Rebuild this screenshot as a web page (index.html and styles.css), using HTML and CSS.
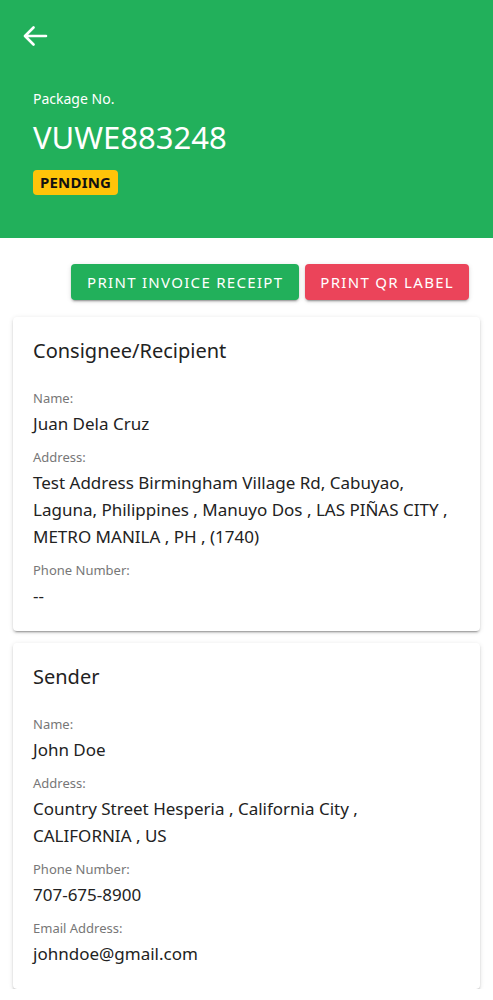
FILE: index.html
```html
<!DOCTYPE html>
<html>
<head>
<meta charset="utf-8">
<link rel="stylesheet" href="styles.css">
</head>
<body>
<header class="top">
  <svg class="back" width="25" height="20" viewBox="0 0 25 20" fill="none" stroke="#fff" stroke-width="2.6" stroke-linecap="round" stroke-linejoin="round">
    <path d="M10.5 1.5 L2 10 L10.5 18.5 M2.5 10 H23"/>
  </svg>
  <div class="info">
    <div class="pkg-label">Package No.</div>
    <div class="pkg-no">VUWE883248</div>
    <span class="badge">PENDING</span>
  </div>
</header>
<div class="actions">
  <button class="btn btn-green">PRINT INVOICE RECEIPT</button>
  <button class="btn btn-red">PRINT QR LABEL</button>
</div>
<section class="card">
  <h2 class="card-title">Consignee/Recipient</h2>
  <div class="field">
    <div class="label">Name:</div>
    <div class="value">Juan Dela Cruz</div>
  </div>
  <div class="field">
    <div class="label">Address:</div>
    <div class="value">Test Address Birmingham Village Rd, Cabuyao, Laguna, Philippines , Manuyo Dos , LAS PIÑAS CITY , METRO MANILA , PH , (1740)</div>
  </div>
  <div class="field">
    <div class="label">Phone Number:</div>
    <div class="value">--</div>
  </div>
</section>
<section class="card">
  <h2 class="card-title">Sender</h2>
  <div class="field">
    <div class="label">Name:</div>
    <div class="value">John Doe</div>
  </div>
  <div class="field">
    <div class="label">Address:</div>
    <div class="value">Country Street Hesperia , California City ,<br>CALIFORNIA , US</div>
  </div>
  <div class="field">
    <div class="label">Phone Number:</div>
    <div class="value">707-675-8900</div>
  </div>
  <div class="field">
    <div class="label">Email Address:</div>
    <div class="value">johndoe@gmail.com</div>
  </div>
</section>
</body>
</html>
```

FILE: styles.css
```css
html, body {
  margin: 0;
  padding: 0;
  background: #ffffff;
  font-family: "Noto Sans", "Open Sans", sans-serif;
  color: #222222;
}

.top {
  background: #22b05b;
  height: 238px;
  box-sizing: border-box;
  padding-top: 26px;
}

.back {
  display: block;
  margin-left: 23px;
}

.info {
  padding-left: 33px;
  margin-top: 43px;
  color: #ffffff;
}

.pkg-label {
  font-size: 14px;
  line-height: 20px;
}

.pkg-no {
  font-size: 31px;
  line-height: 40px;
  margin-top: 8px;
}

.badge {
  display: inline-block;
  margin-top: 13px;
  background: #ffc409;
  color: #111111;
  font-weight: 700;
  font-size: 15px;
  line-height: 17px;
  padding: 4px 7px;
  border-radius: 4px;
  letter-spacing: 0.2px;
}

.actions {
  display: flex;
  justify-content: flex-end;
  gap: 6px;
  padding: 26px 24px 0 0;
}

.btn {
  border: none;
  height: 36px;
  padding: 0 16px;
  border-radius: 4px;
  color: #ffffff;
  font-family: "Noto Sans", "Open Sans", sans-serif;
  font-size: 15px;
  letter-spacing: 1.3px;
  box-shadow: 0 3px 1px -2px rgba(0,0,0,.2), 0 2px 2px 0 rgba(0,0,0,.14), 0 1px 5px 0 rgba(0,0,0,.12);
}

.btn-green { background: #22b05b; }
.btn-red { background: #eb445a; padding: 0 15px; }

.card {
  margin: 17px 13px 0 13px;
  padding: 20px 20px 22px 20px;
  border-radius: 4px;
  background: #ffffff;
  box-shadow: 0 3px 1px -2px rgba(0,0,0,.2), 0 2px 2px 0 rgba(0,0,0,.14), 0 1px 5px 0 rgba(0,0,0,.12);
}

.card + .card {
  margin-top: 12px;
}

.card-title {
  margin: 0 0 24px 0;
  font-size: 20px;
  line-height: 28px;
  font-weight: 400;
  color: #222222;
}

.field {
  margin-top: 11px;
}

.label {
  font-size: 13px;
  line-height: 18px;
  color: #777777;
}

.value {
  margin-top: 3px;
  font-size: 17px;
  line-height: 27px;
  color: #222222;
}
```
